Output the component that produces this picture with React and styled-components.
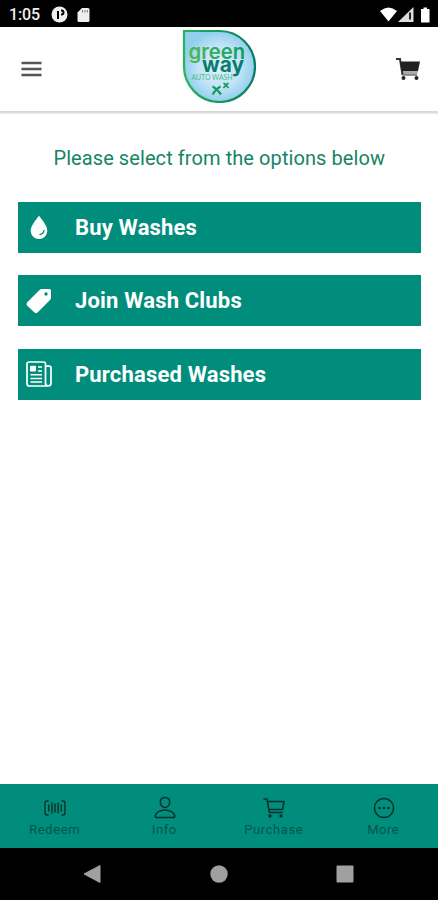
import styled, { createGlobalStyle } from "styled-components";

const GlobalStyle = createGlobalStyle`
    * {
        box-sizing: border-box;
    }
    body {
        margin: 0;
        background-color: white;
        font-family: Roboto, sans-serif;
    }
    svg {
        display: block;
        flex-shrink: 0;
    }
`
const Container = styled.div`
    height: 900px;
    display: flex;
    flex-direction: column;
    overflow: hidden;
`
const StatusBar = styled.div`
    height: 27px;
    background-color: black;
    color: #eee;
    display: flex;
    align-items: center;
    justify-content: space-between;
    padding: 2px 8px 0 9px;
`
const StatusGroup = styled.div`
    display: flex;
    align-items: center;
    gap: ${props => props.$gap}px;
`
const Time = styled.span`
    font-size: 16px;
    font-weight: 500;
    line-height: 20px;
    width: 31px;
    margin-right: 2px;
    letter-spacing: -0.1px;
`
const Header = styled.header`
    height: 86px;
    display: flex;
    align-items: center;
    justify-content: space-between;
    padding: 0 17px 6px 21px;
    border-bottom: 2px solid #d9d9d9;
    box-shadow: 0 1px 1px #eee;
`
const IconButton = styled.button`
    display: flex;
    padding: 0;
    border: none;
    background: none;
    margin-top: 5px;
`
const Content = styled.main`
    flex: 1;
    padding: 32.5px 17.5px 0 18px;
`
const Title = styled.h1`
    margin: 0 0 31px;
    text-align: center;
    font-size: 20px;
    font-weight: 400;
    line-height: 25px;
    letter-spacing: 0.08px;
    color: #168465;
`
const Options = styled.div`
    display: flex;
    flex-direction: column;
    gap: 22.5px;
`
const Option = styled.button`
    height: 51px;
    display: flex;
    align-items: center;
    gap: 23px;
    padding: 0 8px;
    border: none;
    background-color: #008d7b;
    color: white;
    font-family: inherit;
    font-size: 22px;
    font-weight: 700;
    letter-spacing: 0.17px;
    text-align: left;
`
const TabBar = styled.nav`
    height: 63.5px;
    display: grid;
    grid-template-columns: repeat(4, 1fr);
    background-color: #008d7b;
`
const Tab = styled.div`
    display: flex;
    flex-direction: column;
    align-items: center;
    padding: 12px 0 0 1px;
    color: #05312c;
`
const TabLabel = styled.span`
    margin: 2px 1px 0 0;
    font-size: 13px;
    line-height: 16px;
    letter-spacing: ${props => props.$spacing}px;
    color: #03564c;
`
const NavBar = styled.div`
    height: 52.5px;
    display: flex;
    align-items: center;
    justify-content: space-between;
    padding: 0 84px 0 83px;
    background-color: black;
`

const Logo = () => (
    <svg width="74" height="74" viewBox="0 0 74 74">
        <defs>
            <radialGradient id="drop">
                <stop offset="0" stopColor="#e0f1fb" />
                <stop offset="0.6" stopColor="#c2e3f7" />
                <stop offset="1" stopColor="#92cfed" />
            </radialGradient>
            <linearGradient id="edge">
                <stop offset="0" stopColor="#27b45b" />
                <stop offset="1" stopColor="#087a65" />
            </linearGradient>
            <linearGradient id="word">
                <stop offset="0" stopColor="#4dba55" />
                <stop offset="1" stopColor="#119c63" />
            </linearGradient>
        </defs>
        <path d="M2 2H37A35.500 35.500 0 1 1 2 37Z" fill="url(#drop)" stroke="url(#edge)" strokeWidth="2.2" />
        <text x="6.500" y="30" textLength="56.500" lengthAdjust="spacingAndGlyphs" fontFamily="Inter, sans-serif" fontWeight="600" fontSize="20.500" fill="url(#word)">green</text>
        <text x="20" y="43" textLength="42" lengthAdjust="spacingAndGlyphs" fontFamily="Inter, sans-serif" fontWeight="700" fontSize="20.500" fill="#087d6c">way</text>
        <text x="9.500" y="50.500" textLength="41" lengthAdjust="spacingAndGlyphs" fontFamily="Lato, sans-serif" fontSize="7" fill="#4fb88b">AUTO WASH</text>
        <path d="M30.500 57.500q4 2 8.500 8M38.500 57.500q-4 2-8 8" fill="none" stroke="#159b5b" strokeWidth="2.2" />
        <path d="M41.500 54q2.500 1.500 5 5M46.500 54q-2.500 1.500-5 5" fill="none" stroke="#159b5b" strokeWidth="1.600" />
    </svg>
)

const MenuIcon = () => (
    <svg width="21" height="18" viewBox="0 0 21 18" stroke="#555" strokeWidth="2.4">
        <path d="M0.500 3H20.500M0.500 9H20.500M0.500 15H20.500" />
    </svg>
)

const CartIcon = () => (
    <svg width="26" height="24" viewBox="0 0 26 24">
        <path d="M7 14H23L22 18H8Z" fill="#aaa" />
        <path d="M1 2H5L7.500 18" fill="none" stroke="#333" strokeWidth="2" />
        <path d="M7.500 18H22" fill="none" stroke="#777" strokeWidth="1.500" />
        <path d="M5 4.500H25L23 14H7Z" fill="#202124" />
        <circle cx="8.500" cy="21" r="2" fill="#252525" />
        <circle cx="21.500" cy="21" r="2" fill="#252525" />
    </svg>
)

const DropIcon = () => (
    <svg width="26" height="26" viewBox="0 0 26 26">
        <path d="M13 1.500C11 5 4.700 11 4.700 17A8.300 8 0 0 0 21.300 17C21.300 11 15 5 13 1.500Z" fill="white" />
        <path d="M14 20.500Q17.500 20 18 16.500" fill="none" stroke="#008d7b" strokeWidth="1.300" strokeLinecap="round" />
    </svg>
)

const TagIcon = () => (
    <svg width="26" height="26" viewBox="0 0 26 26">
        <path d="M16 1H23.500Q25 1 25 2.500V9.500Q25 11 24 12L11.500 24.500Q10 26 8.500 24.500L1 17.500Q0 16 1 14.500L13.500 2Q14.500 1 16 1Z" fill="white" />
        <circle cx="20" cy="6" r="1.700" fill="#008d7b" />
    </svg>
)

const PaperIcon = () => (
    <svg width="26" height="26" viewBox="0 0 26 26" fill="none" stroke="white" strokeWidth="1.700">
        <path d="M19.500 22V3Q19.500 1 17.500 1H3Q1 1 1 3V22.500Q1 25 3.500 25H22Q25 25 25 22V7Q25 5.200 23 5.200H19.500M19.500 22Q19.500 25 22 25" />
        <path d="M12 6H16M12 10H16M4.500 13.700H16M4.500 17.400H16M4.500 21.100H16" strokeWidth="1.500" />
        <path d="M4.500 5.300H9.500V10H4.500Z" fill="white" strokeWidth="1" />
    </svg>
)

const RedeemIcon = () => (
    <svg width="24" height="24" viewBox="0 0 24 24" fill="none" stroke="currentColor" strokeWidth="1.400" strokeLinecap="round">
        <path d="M5 5H4Q2 5 2 7V17Q2 19 4 19H5M19 5H20Q22 5 22 7V17Q22 19 20 19H19" />
        <path d="M5.700 9V15M8.900 7V17M12 8V16M15.100 7V17M18.300 9V15" />
    </svg>
)

const InfoIcon = () => (
    <svg width="24" height="24" viewBox="0 0 24 24" fill="none" stroke="currentColor" strokeWidth="1.500" strokeLinejoin="round">
        <path d="M12 1.500C9 1.500 7 3.500 7.300 6.500C7.500 9 9.500 11.500 12 11.500S16.500 9 16.700 6.500C17 3.500 15 1.500 12 1.500Z" />
        <path d="M12 14C7 14 3 16.500 2.300 19.500Q2 21.500 3.500 21.500H20.500Q22 21.500 21.700 19.500C21 16.500 17 14 12 14Z" />
    </svg>
)

const PurchaseIcon = () => (
    <svg width="24" height="24" viewBox="0 0 24 24" fill="none" stroke="currentColor" strokeWidth="1.500" strokeLinecap="round" strokeLinejoin="round">
        <path d="M2 3H5L7.300 16.500H20M5.500 5.500H22L20.500 13.500H7" />
        <circle cx="8" cy="20" r="0.900" fill="currentColor" />
        <circle cx="19" cy="20" r="0.900" fill="currentColor" />
    </svg>
)

const MoreIcon = () => (
    <svg width="24" height="24" viewBox="0 0 24 24">
        <circle cx="12" cy="12" r="9.600" fill="none" stroke="currentColor" strokeWidth="1.500" />
        <g fill="currentColor">
            <circle cx="7.500" cy="12" r="1.300" />
            <circle cx="12" cy="12" r="1.300" />
            <circle cx="16.500" cy="12" r="1.300" />
        </g>
    </svg>
)

const options = [
    { title: "Buy Washes", icon: <DropIcon /> },
    { title: "Join Wash Clubs", icon: <TagIcon /> },
    { title: "Purchased Washes", icon: <PaperIcon /> },
]

const tabs = [
    { title: "Redeem", icon: <RedeemIcon />, spacing: 0.6 },
    { title: "Info", icon: <InfoIcon />, spacing: 0.5 },
    { title: "Purchase", icon: <PurchaseIcon />, spacing: 0.6 },
    { title: "More", icon: <MoreIcon />, spacing: 0.5 },
]

const App = () => {
    return(
        <Container>
            <GlobalStyle />
            <StatusBar>
                <StatusGroup $gap={9}>
                    <Time>1:05</Time>
                    <svg width="17" height="17" viewBox="0 0 17 17">
                        <circle cx="8.500" cy="8.500" r="8" fill="#eee" />
                        <path d="M7 13V5M10 4.500H10.500A2 2 0 0 1 10.500 8.500H10" fill="none" stroke="black" strokeWidth="2" />
                    </svg>
                    <svg width="13" height="16" viewBox="0 0 13 16">
                        <path d="M5 1H11Q12.500 1 12.500 2.500V13.500Q12.500 15 11 15H2Q0.500 15 0.500 13.500V5.500Z" fill="#eee" />
                        <path d="M5.500 3V5.500M8 3V5.500M10.300 3V5.500" stroke="#777" strokeWidth="1" />
                    </svg>
                </StatusGroup>
                <StatusGroup $gap={1}>
                    <svg width="17" height="15" viewBox="0 0 17 15">
                        <path d="M0 4Q8.500 -3 17 4L8.500 14.500Z" fill="#fff" />
                    </svg>
                    <svg width="16" height="15" viewBox="0 0 16 15">
                        <path d="M0 15L15.500 0V15Z" fill="#ddd" />
                        <path d="M12 5.500V12.500" stroke="#222" strokeWidth="2" />
                    </svg>
                    <svg width="15" height="16" viewBox="0 0 15 16">
                        <path d="M6 2H8.500V0.500H12V2H14.500V15.500H6Z" fill="#fff" />
                    </svg>
                </StatusGroup>
            </StatusBar>
            <Header>
                <IconButton><MenuIcon /></IconButton>
                <Logo />
                <IconButton><CartIcon /></IconButton>
            </Header>
            <Content>
                <Title>Please select from the options below</Title>
                <Options>
                    {options.map(el => (
                        <Option key={el.title}>{el.icon}{el.title}</Option>
                    ))}
                </Options>
            </Content>
            <TabBar>
                {tabs.map(el => (
                    <Tab key={el.title}>
                        {el.icon}
                        <TabLabel $spacing={el.spacing}>{el.title}</TabLabel>
                    </Tab>
                ))}
            </TabBar>
            <NavBar>
                <svg width="18" height="20" viewBox="0 0 18 20">
                    <path d="M17 1.500V18.500L1 10Z" fill="#a0a0a0" stroke="#a0a0a0" strokeLinejoin="round" />
                </svg>
                <svg width="18" height="18" viewBox="0 0 18 18">
                    <circle cx="9" cy="9" r="8.700" fill="#a0a0a0" />
                </svg>
                <svg width="18" height="18" viewBox="0 0 18 18">
                    <rect x="0.500" y="0.500" width="17" height="17" rx="1" fill="#a0a0a0" />
                </svg>
            </NavBar>
        </Container>
    )
}

export default App;
